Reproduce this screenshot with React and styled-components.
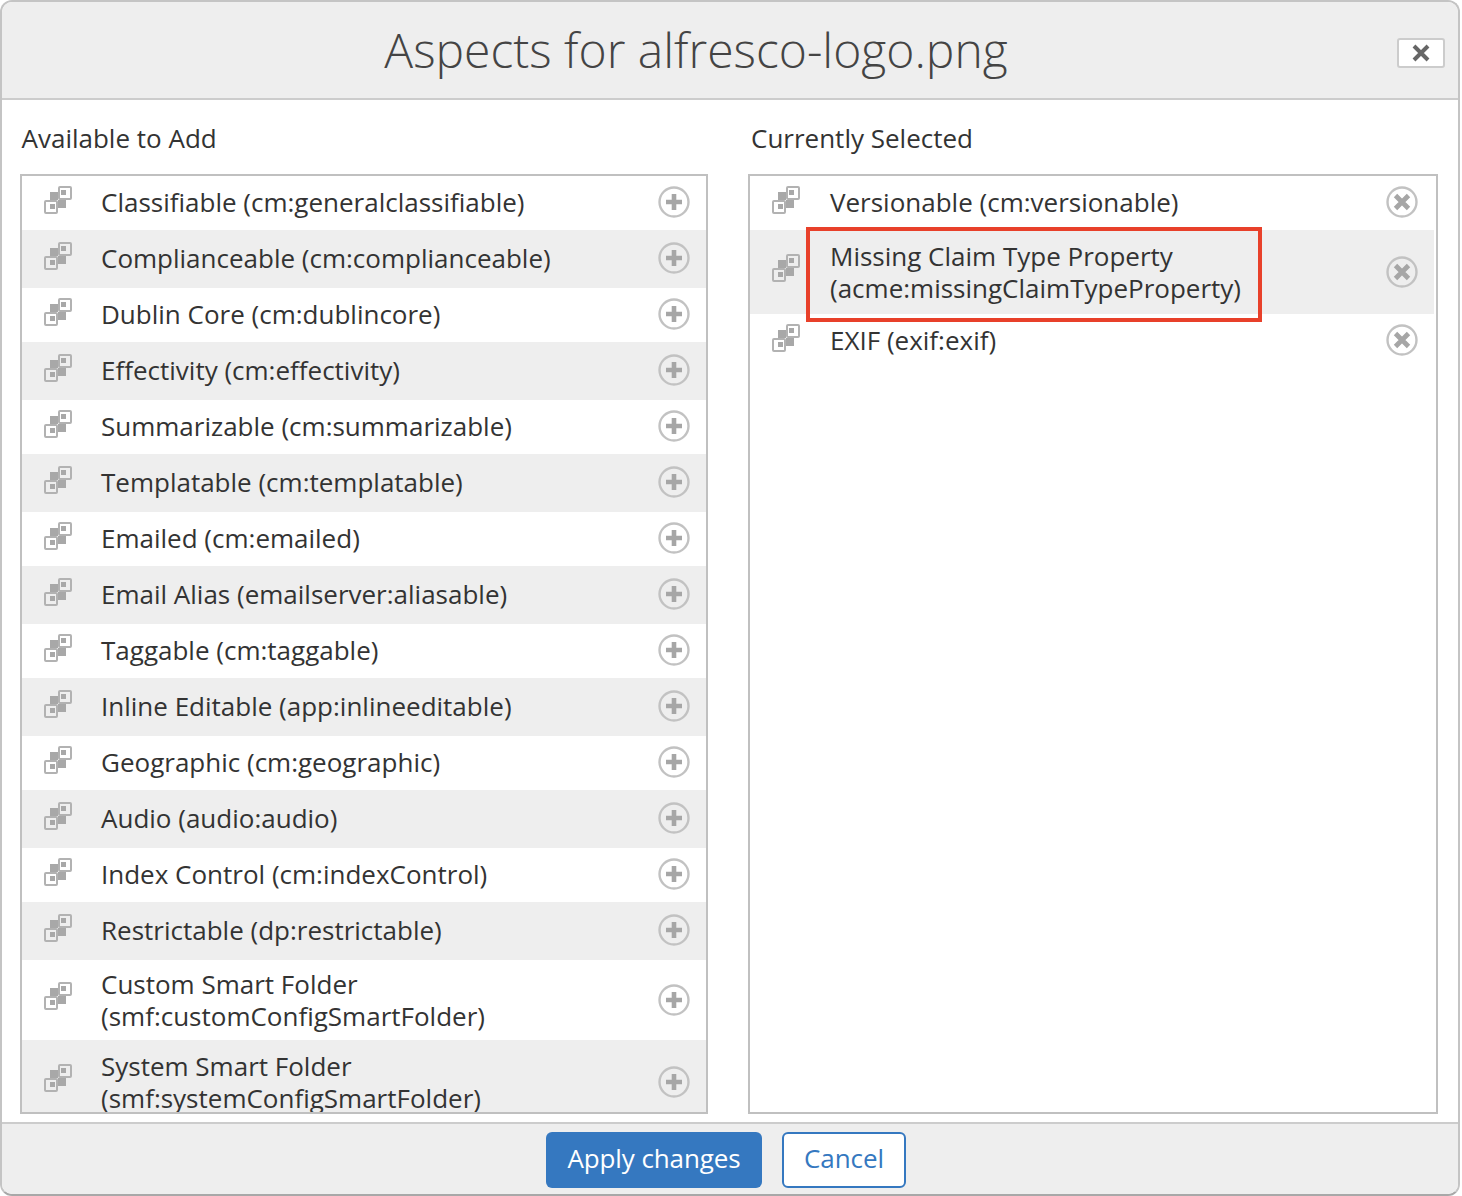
import styled, { createGlobalStyle } from 'styled-components';

const GlobalStyle = createGlobalStyle`
  html, body {
    margin: 0;
    padding: 0;
    background: #fff;
  }
  * {
    box-sizing: border-box;
  }
`

const available = [
  'Classifiable (cm:generalclassifiable)',
  'Complianceable (cm:complianceable)',
  'Dublin Core (cm:dublincore)',
  'Effectivity (cm:effectivity)',
  'Summarizable (cm:summarizable)',
  'Templatable (cm:templatable)',
  'Emailed (cm:emailed)',
  'Email Alias (emailserver:aliasable)',
  'Taggable (cm:taggable)',
  'Inline Editable (app:inlineeditable)',
  'Geographic (cm:geographic)',
  'Audio (audio:audio)',
  'Index Control (cm:indexControl)',
  'Restrictable (dp:restrictable)',
  'Custom Smart Folder\n(smf:customConfigSmartFolder)',
  'System Smart Folder\n(smf:systemConfigSmartFolder)',
]

const selected = [
  { label: 'Versionable (cm:versionable)' },
  { label: 'Missing Claim Type Property\n(acme:missingClaimTypeProperty)', flagged: true },
  { label: 'EXIF (exif:exif)' },
]

function AspectIcon({ tall }) {
  return (
    <IconSvg viewBox="0 0 28 28" $tall={tall}>
      <g fill="none" stroke="#b2b2b2" strokeWidth="2">
        <rect x="15" y="1" width="12" height="12" rx="1" />
        <rect x="1" y="15" width="12" height="12" rx="1" />
      </g>
      <g fill="#a8a8a8">
        <rect x="6" y="6" width="8" height="8" />
        <rect x="14" y="14" width="8" height="8" />
        <rect x="17" y="4" width="5" height="5" />
        <rect x="6" y="18" width="5" height="5" />
      </g>
    </IconSvg>
  )
}

function AddIcon({ tall }) {
  return (
    <ActionSvg viewBox="0 0 32 32" $tall={tall}>
      <circle cx="16" cy="16" r="14.5" fill="none" stroke="#c2c2c2" strokeWidth="2.4" />
      <path d="M8 16h16M16 8v16" stroke="#a6a6a6" strokeWidth="4.6" />
    </ActionSvg>
  )
}

function RemoveIcon({ tall }) {
  return (
    <ActionSvg viewBox="0 0 32 32" $tall={tall}>
      <circle cx="16" cy="16" r="14.5" fill="none" stroke="#c2c2c2" strokeWidth="2.4" />
      <path d="M9.5 9.5l13 13M22.5 9.5l-13 13" stroke="#a6a6a6" strokeWidth="4.8" />
    </ActionSvg>
  )
}

export default function App() {
  return (
    <>
      <GlobalStyle />
      <Dialog>
        <Header>
          <Title>Aspects for alfresco-logo.png</Title>
          <CloseButton type="button">
            <CloseSvg viewBox="0 0 20 20">
              <path d="M3 3l14 14M17 3L3 17" stroke="#666" strokeWidth="4" />
            </CloseSvg>
          </CloseButton>
        </Header>
        <Body>
          <Column>
            <ColumnTitle>Available to Add</ColumnTitle>
            <List>
              {available.map((label, i) => {
                const tall = label.includes('\n')
                return (
                  <Row key={label} $striped={i % 2 === 1} $tall={tall}>
                    <AspectIcon tall={tall} />
                    <Name>{label}</Name>
                    <AddIcon tall={tall} />
                  </Row>
                )
              })}
            </List>
          </Column>
          <Column>
            <ColumnTitle $right>Currently Selected</ColumnTitle>
            <List $gutter>
              {selected.map((item, i) => {
                const tall = item.label.includes('\n')
                return (
                  <Row key={item.label} $striped={i % 2 === 1} $tall={tall}>
                    <AspectIcon tall={tall} />
                    <Name $right>
                      {item.label}
                      {item.flagged && <Highlight />}
                    </Name>
                    <RemoveIcon tall={tall} />
                  </Row>
                )
              })}
            </List>
          </Column>
        </Body>
        <Footer>
          <PrimaryButton type="button">Apply changes</PrimaryButton>
          <SecondaryButton type="button">Cancel</SecondaryButton>
        </Footer>
      </Dialog>
    </>
  );
}

const Dialog = styled.div`
  width: 1460px;
  height: 1196px;
  display: flex;
  flex-direction: column;
  background: #fff;
  border: 2px solid #c4c4c4;
  border-bottom-color: #a8a8a8;
  border-radius: 12px;
  overflow: hidden;
  font-family: 'Open Sans', sans-serif;
  color: #333;
`

const Header = styled.div`
  height: 98px;
  flex: none;
  display: flex;
  align-items: center;
  padding-right: 13px;
  background: #eee;
  border-bottom: 2px solid #ccc;
`

const Title = styled.div`
  flex: 1;
  margin-right: 7px;
  text-align: center;
  font-size: 48px;
  font-weight: 300;
  line-height: 60px;
  color: #444;
`

const CloseButton = styled.button`
  width: 48px;
  height: 30px;
  margin-top: 6px;
  padding: 0;
  display: flex;
  align-items: center;
  justify-content: center;
  background: #fff;
  border: 2px solid #ccc;
  border-radius: 3px;
`

const CloseSvg = styled.svg`
  width: 20px;
  height: 20px;
  filter: blur(0.4px);
`

const Body = styled.div`
  flex: 1;
  min-height: 0;
  display: grid;
  grid-template-columns: 688px 690px;
  column-gap: 40px;
  padding: 0 20px 8px 18px;
`

const Column = styled.div`
  display: flex;
  flex-direction: column;
  min-height: 0;
`

const ColumnTitle = styled.div`
  height: 74px;
  flex: none;
  padding: 22px 0 0 ${p => (p.$right ? '3px' : '1.5px')};
  font-size: 26px;
  line-height: 32px;
  color: #333;
`

const List = styled.div`
  flex: 1;
  min-height: 0;
  overflow: hidden;
  border: 2px solid #c0c0c0;
  padding-right: ${p => (p.$gutter ? '2px' : '0')};
`

const Row = styled.div`
  height: ${p => (p.$tall ? (p.$striped ? '84px' : '80px') : p.$striped ? '58px' : '54px')};
  flex: none;
  display: flex;
  align-items: center;
  padding: 0 16px ${p => (p.$tall ? '0' : '3px')} 22px;
  background: ${p => (p.$striped ? '#eee' : '#fff')};
`

const IconSvg = styled.svg`
  width: 28px;
  height: 28px;
  flex: none;
  margin-bottom: ${p => (p.$tall ? '8px' : '4px')};
  filter: blur(0.4px);
`

const ActionSvg = styled.svg`
  width: 32px;
  height: 32px;
  flex: none;
  margin-left: auto;
  margin-bottom: ${p => (p.$tall ? '1px' : '0')};
  filter: blur(0.4px);
`

const Name = styled.div`
  position: relative;
  margin-left: ${p => (p.$right ? '30px' : '29px')};
  font-size: 26px;
  line-height: 32px;
  white-space: pre-line;
  color: #333;
`

const Highlight = styled.div`
  position: absolute;
  left: -24px;
  top: -13px;
  width: 456px;
  height: 95px;
  border: 4px solid #e8402a;
`

const Footer = styled.div`
  height: 72px;
  flex: none;
  display: flex;
  align-items: center;
  justify-content: center;
  gap: 20px;
  padding: 2px 8px 0 0;
  background: #eee;
  border-top: 2px solid #ccc;
`

const PrimaryButton = styled.button`
  width: 216px;
  height: 56px;
  padding: 0 0 5px;
  background: #3578c0;
  border: 0;
  border-radius: 6px;
  color: #fff;
  font-family: inherit;
  font-size: 26px;
  letter-spacing: -0.1px;
`

const SecondaryButton = styled.button`
  width: 124px;
  height: 56px;
  padding: 0 0 5px;
  background: #fff;
  border: 2px solid #3578c0;
  border-radius: 6px;
  color: #3578c0;
  font-family: inherit;
  font-size: 26px;
  letter-spacing: -0.1px;
`
